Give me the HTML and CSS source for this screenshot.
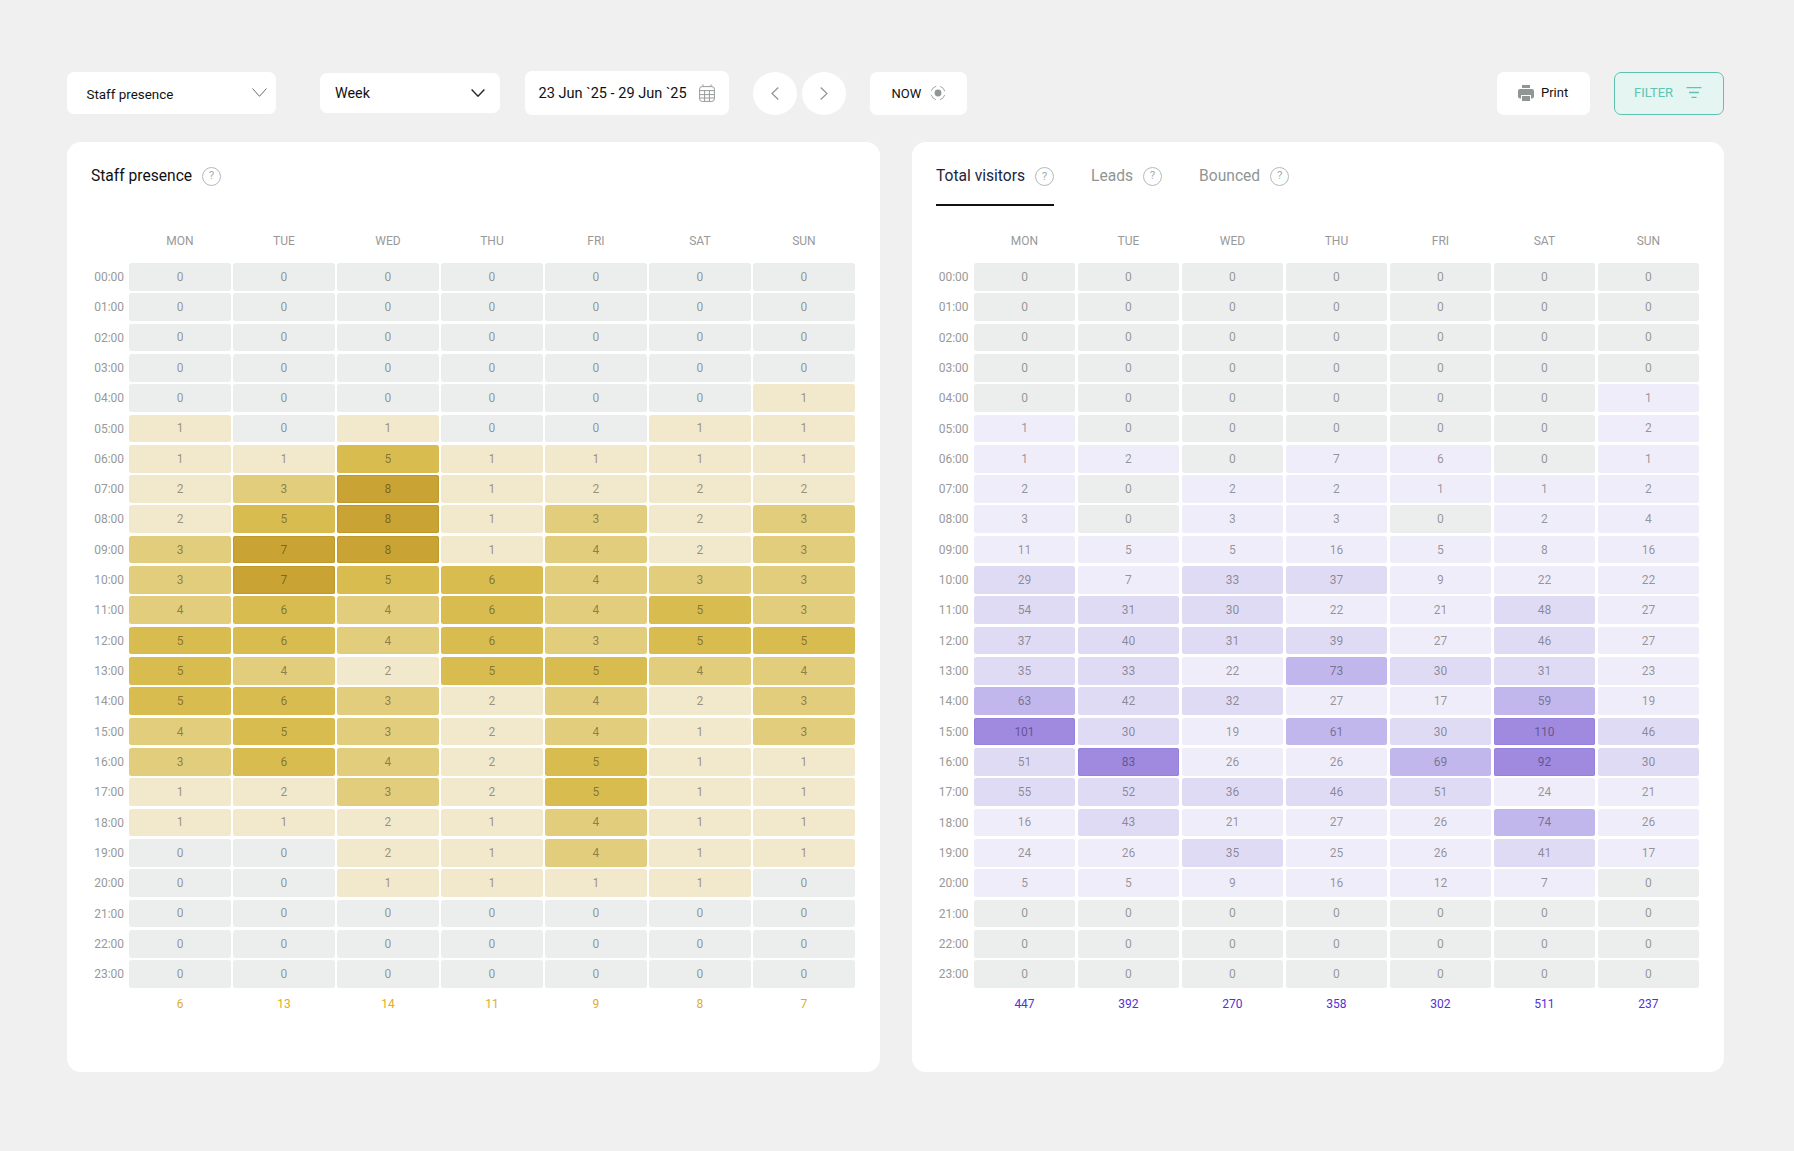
FILE: index.html
```html
<!DOCTYPE html>
<html lang="en">
<head>
<meta charset="utf-8">
<title>Staff presence</title>
<link rel="stylesheet" href="styles.css">
</head>
<body>
<main class="page">
<header class="toolbar">
  <div class="box sel-type"><span class="sel-type-label">Staff presence</span><svg class="chev-thin" viewBox="0 0 15 9"><path d="M.5.5 7.5 8.3 14.5.5"/></svg></div>
  <div class="box sel-range"><span>Week</span><svg class="chev-bold" viewBox="0 0 14 8"><path d="M.6.6 7 7.2 13.4.6"/></svg></div>
  <div class="box date"><span>23 Jun `25 - 29 Jun `25</span><svg class="cal" viewBox="0 0 16 18"><rect x=".6" y="2.6" width="14.8" height="14.8" rx="2.6"/><path d="M.6 6.6h14.8M.6 10.6h14.8M.6 14h14.8M5.6 6.6v10.8M10.4 6.6v10.8M4 .4v2.2M12 .4v2.2"/></svg></div>
  <button class="round"><svg viewBox="0 0 8 13"><path d="M7.3.5 1 6.5l6.3 6"/></svg></button>
  <button class="round next"><svg viewBox="0 0 8 13"><path d="M.7.5 7 6.5l-6.3 6"/></svg></button>
  <div class="box now"><span>NOW</span><svg class="now-ico" viewBox="0 0 16 16"><circle class="now-ring" cx="8" cy="8" r="7"/><circle class="now-dot" cx="8" cy="8" r="3.4"/></svg></div>
  <div class="box print"><svg class="print-ico" viewBox="0 0 16 16"><path d="M4 0h8v3H4z"/><path d="M2 4h12a2 2 0 0 1 2 2v5.500a2 2 0 0 1-2 2h-1V10H3v3.500H2a2 2 0 0 1-2-2V6a2 2 0 0 1 2-2z"/><path d="M4 11h8v5H4z"/></svg><span>Print</span></div>
  <div class="box filter"><span>FILTER</span><svg class="filter-ico" viewBox="0 0 16 11"><path d="M.5.7h15M3 5.500h10M5.500 10.300h5"/></svg></div>
</header>

<div class="cards">
<section class="card gold">
  <div class="card-head"><div class="tab tab-title">Staff presence<span class="help">?</span></div></div>
  <div class="heat">
    <div></div><div class="d">MON</div><div class="d">TUE</div><div class="d">WED</div><div class="d">THU</div><div class="d">FRI</div><div class="d">SAT</div><div class="d">SUN</div>
    <div class="t">00:00</div><div class="c l0">0</div><div class="c l0">0</div><div class="c l0">0</div><div class="c l0">0</div><div class="c l0">0</div><div class="c l0">0</div><div class="c l0">0</div>
    <div class="t">01:00</div><div class="c l0">0</div><div class="c l0">0</div><div class="c l0">0</div><div class="c l0">0</div><div class="c l0">0</div><div class="c l0">0</div><div class="c l0">0</div>
    <div class="t">02:00</div><div class="c l0">0</div><div class="c l0">0</div><div class="c l0">0</div><div class="c l0">0</div><div class="c l0">0</div><div class="c l0">0</div><div class="c l0">0</div>
    <div class="t">03:00</div><div class="c l0">0</div><div class="c l0">0</div><div class="c l0">0</div><div class="c l0">0</div><div class="c l0">0</div><div class="c l0">0</div><div class="c l0">0</div>
    <div class="t">04:00</div><div class="c l0">0</div><div class="c l0">0</div><div class="c l0">0</div><div class="c l0">0</div><div class="c l0">0</div><div class="c l0">0</div><div class="c l1">1</div>
    <div class="t">05:00</div><div class="c l1">1</div><div class="c l0">0</div><div class="c l1">1</div><div class="c l0">0</div><div class="c l0">0</div><div class="c l1">1</div><div class="c l1">1</div>
    <div class="t">06:00</div><div class="c l1">1</div><div class="c l1">1</div><div class="c l3">5</div><div class="c l1">1</div><div class="c l1">1</div><div class="c l1">1</div><div class="c l1">1</div>
    <div class="t">07:00</div><div class="c l1">2</div><div class="c l2">3</div><div class="c l4">8</div><div class="c l1">1</div><div class="c l1">2</div><div class="c l1">2</div><div class="c l1">2</div>
    <div class="t">08:00</div><div class="c l1">2</div><div class="c l3">5</div><div class="c l4">8</div><div class="c l1">1</div><div class="c l2">3</div><div class="c l1">2</div><div class="c l2">3</div>
    <div class="t">09:00</div><div class="c l2">3</div><div class="c l4">7</div><div class="c l4">8</div><div class="c l1">1</div><div class="c l2">4</div><div class="c l1">2</div><div class="c l2">3</div>
    <div class="t">10:00</div><div class="c l2">3</div><div class="c l4">7</div><div class="c l3">5</div><div class="c l3">6</div><div class="c l2">4</div><div class="c l2">3</div><div class="c l2">3</div>
    <div class="t">11:00</div><div class="c l2">4</div><div class="c l3">6</div><div class="c l2">4</div><div class="c l3">6</div><div class="c l2">4</div><div class="c l3">5</div><div class="c l2">3</div>
    <div class="t">12:00</div><div class="c l3">5</div><div class="c l3">6</div><div class="c l2">4</div><div class="c l3">6</div><div class="c l2">3</div><div class="c l3">5</div><div class="c l3">5</div>
    <div class="t">13:00</div><div class="c l3">5</div><div class="c l2">4</div><div class="c l1">2</div><div class="c l3">5</div><div class="c l3">5</div><div class="c l2">4</div><div class="c l2">4</div>
    <div class="t">14:00</div><div class="c l3">5</div><div class="c l3">6</div><div class="c l2">3</div><div class="c l1">2</div><div class="c l2">4</div><div class="c l1">2</div><div class="c l2">3</div>
    <div class="t">15:00</div><div class="c l2">4</div><div class="c l3">5</div><div class="c l2">3</div><div class="c l1">2</div><div class="c l2">4</div><div class="c l1">1</div><div class="c l2">3</div>
    <div class="t">16:00</div><div class="c l2">3</div><div class="c l3">6</div><div class="c l2">4</div><div class="c l1">2</div><div class="c l3">5</div><div class="c l1">1</div><div class="c l1">1</div>
    <div class="t">17:00</div><div class="c l1">1</div><div class="c l1">2</div><div class="c l2">3</div><div class="c l1">2</div><div class="c l3">5</div><div class="c l1">1</div><div class="c l1">1</div>
    <div class="t">18:00</div><div class="c l1">1</div><div class="c l1">1</div><div class="c l1">2</div><div class="c l1">1</div><div class="c l2">4</div><div class="c l1">1</div><div class="c l1">1</div>
    <div class="t">19:00</div><div class="c l0">0</div><div class="c l0">0</div><div class="c l1">2</div><div class="c l1">1</div><div class="c l2">4</div><div class="c l1">1</div><div class="c l1">1</div>
    <div class="t">20:00</div><div class="c l0">0</div><div class="c l0">0</div><div class="c l1">1</div><div class="c l1">1</div><div class="c l1">1</div><div class="c l1">1</div><div class="c l0">0</div>
    <div class="t">21:00</div><div class="c l0">0</div><div class="c l0">0</div><div class="c l0">0</div><div class="c l0">0</div><div class="c l0">0</div><div class="c l0">0</div><div class="c l0">0</div>
    <div class="t">22:00</div><div class="c l0">0</div><div class="c l0">0</div><div class="c l0">0</div><div class="c l0">0</div><div class="c l0">0</div><div class="c l0">0</div><div class="c l0">0</div>
    <div class="t">23:00</div><div class="c l0">0</div><div class="c l0">0</div><div class="c l0">0</div><div class="c l0">0</div><div class="c l0">0</div><div class="c l0">0</div><div class="c l0">0</div>
    <div></div><div class="s">6</div><div class="s">13</div><div class="s">14</div><div class="s">11</div><div class="s">9</div><div class="s">8</div><div class="s">7</div>
  </div>
</section>

<section class="card violet">
  <div class="card-head tabs">
    <div class="tab active">Total visitors<span class="help">?</span></div>
    <div class="tab">Leads<span class="help">?</span></div>
    <div class="tab">Bounced<span class="help">?</span></div>
  </div>
  <div class="heat">
    <div></div><div class="d">MON</div><div class="d">TUE</div><div class="d">WED</div><div class="d">THU</div><div class="d">FRI</div><div class="d">SAT</div><div class="d">SUN</div>
    <div class="t">00:00</div><div class="c l0">0</div><div class="c l0">0</div><div class="c l0">0</div><div class="c l0">0</div><div class="c l0">0</div><div class="c l0">0</div><div class="c l0">0</div>
    <div class="t">01:00</div><div class="c l0">0</div><div class="c l0">0</div><div class="c l0">0</div><div class="c l0">0</div><div class="c l0">0</div><div class="c l0">0</div><div class="c l0">0</div>
    <div class="t">02:00</div><div class="c l0">0</div><div class="c l0">0</div><div class="c l0">0</div><div class="c l0">0</div><div class="c l0">0</div><div class="c l0">0</div><div class="c l0">0</div>
    <div class="t">03:00</div><div class="c l0">0</div><div class="c l0">0</div><div class="c l0">0</div><div class="c l0">0</div><div class="c l0">0</div><div class="c l0">0</div><div class="c l0">0</div>
    <div class="t">04:00</div><div class="c l0">0</div><div class="c l0">0</div><div class="c l0">0</div><div class="c l0">0</div><div class="c l0">0</div><div class="c l0">0</div><div class="c l1">1</div>
    <div class="t">05:00</div><div class="c l1">1</div><div class="c l0">0</div><div class="c l0">0</div><div class="c l0">0</div><div class="c l0">0</div><div class="c l0">0</div><div class="c l1">2</div>
    <div class="t">06:00</div><div class="c l1">1</div><div class="c l1">2</div><div class="c l0">0</div><div class="c l1">7</div><div class="c l1">6</div><div class="c l0">0</div><div class="c l1">1</div>
    <div class="t">07:00</div><div class="c l1">2</div><div class="c l0">0</div><div class="c l1">2</div><div class="c l1">2</div><div class="c l1">1</div><div class="c l1">1</div><div class="c l1">2</div>
    <div class="t">08:00</div><div class="c l1">3</div><div class="c l0">0</div><div class="c l1">3</div><div class="c l1">3</div><div class="c l0">0</div><div class="c l1">2</div><div class="c l1">4</div>
    <div class="t">09:00</div><div class="c l1">11</div><div class="c l1">5</div><div class="c l1">5</div><div class="c l1">16</div><div class="c l1">5</div><div class="c l1">8</div><div class="c l1">16</div>
    <div class="t">10:00</div><div class="c l2">29</div><div class="c l1">7</div><div class="c l2">33</div><div class="c l2">37</div><div class="c l1">9</div><div class="c l1">22</div><div class="c l1">22</div>
    <div class="t">11:00</div><div class="c l2">54</div><div class="c l2">31</div><div class="c l2">30</div><div class="c l1">22</div><div class="c l1">21</div><div class="c l2">48</div><div class="c l1">27</div>
    <div class="t">12:00</div><div class="c l2">37</div><div class="c l2">40</div><div class="c l2">31</div><div class="c l2">39</div><div class="c l1">27</div><div class="c l2">46</div><div class="c l1">27</div>
    <div class="t">13:00</div><div class="c l2">35</div><div class="c l2">33</div><div class="c l1">22</div><div class="c l3">73</div><div class="c l2">30</div><div class="c l2">31</div><div class="c l1">23</div>
    <div class="t">14:00</div><div class="c l3">63</div><div class="c l2">42</div><div class="c l2">32</div><div class="c l1">27</div><div class="c l1">17</div><div class="c l3">59</div><div class="c l1">19</div>
    <div class="t">15:00</div><div class="c l4">101</div><div class="c l2">30</div><div class="c l1">19</div><div class="c l3">61</div><div class="c l2">30</div><div class="c l4">110</div><div class="c l2">46</div>
    <div class="t">16:00</div><div class="c l2">51</div><div class="c l4">83</div><div class="c l1">26</div><div class="c l1">26</div><div class="c l3">69</div><div class="c l4">92</div><div class="c l2">30</div>
    <div class="t">17:00</div><div class="c l2">55</div><div class="c l2">52</div><div class="c l2">36</div><div class="c l2">46</div><div class="c l2">51</div><div class="c l1">24</div><div class="c l1">21</div>
    <div class="t">18:00</div><div class="c l1">16</div><div class="c l2">43</div><div class="c l1">21</div><div class="c l1">27</div><div class="c l1">26</div><div class="c l3">74</div><div class="c l1">26</div>
    <div class="t">19:00</div><div class="c l1">24</div><div class="c l1">26</div><div class="c l2">35</div><div class="c l1">25</div><div class="c l1">26</div><div class="c l2">41</div><div class="c l1">17</div>
    <div class="t">20:00</div><div class="c l1">5</div><div class="c l1">5</div><div class="c l1">9</div><div class="c l1">16</div><div class="c l1">12</div><div class="c l1">7</div><div class="c l0">0</div>
    <div class="t">21:00</div><div class="c l0">0</div><div class="c l0">0</div><div class="c l0">0</div><div class="c l0">0</div><div class="c l0">0</div><div class="c l0">0</div><div class="c l0">0</div>
    <div class="t">22:00</div><div class="c l0">0</div><div class="c l0">0</div><div class="c l0">0</div><div class="c l0">0</div><div class="c l0">0</div><div class="c l0">0</div><div class="c l0">0</div>
    <div class="t">23:00</div><div class="c l0">0</div><div class="c l0">0</div><div class="c l0">0</div><div class="c l0">0</div><div class="c l0">0</div><div class="c l0">0</div><div class="c l0">0</div>
    <div></div><div class="s">447</div><div class="s">392</div><div class="s">270</div><div class="s">358</div><div class="s">302</div><div class="s">511</div><div class="s">237</div>
  </div>
</section>
</div>
</main>
</body>
</html>
```

FILE: styles.css
```css
* { box-sizing: border-box; }
html, body { margin: 0; padding: 0; }
body {
  background: #f0f0f0;
  font-family: Roboto, "Liberation Sans", sans-serif;
  color: #111;
  min-height: 1151px;
}
.page { padding: 71px 70px 0 67px; }

/* toolbar */
.toolbar { display: flex; align-items: center; height: 44px; }
.box {
  display: flex;
  align-items: center;
  background: #fff;
  border-radius: 7px;
  font-size: 14px;
  flex: none;
}
svg { display: block; flex: none; fill: none; }

.sel-type { width: 209px; height: 42px; padding: 0 9px 0 19.500px; justify-content: space-between; font-size: 13.400px; }
.sel-type-label { padding-top: 3px; }
.chev-thin { width: 15px; height: 9px; margin-top: -1px; stroke: #666b69; stroke-width: 1; }

.sel-range { width: 180px; height: 40px; margin-left: 44px; padding: 0 15px; justify-content: space-between; font-size: 14.300px; }
.chev-bold { width: 14px; height: 8px; stroke: #222; stroke-width: 1.4; }

.date { width: 204px; height: 44px; margin-left: 25px; padding: 0 14px 0 13.500px; justify-content: space-between; font-size: 14.550px; }
.cal { width: 16px; height: 18px; stroke: #959c99; stroke-width: 1; }

.round {
  width: 44px;
  height: 43px;
  margin-left: 24px;
  padding: 0;
  border: 0;
  border-radius: 50%;
  background: #fff;
  display: flex;
  align-items: center;
  justify-content: center;
  flex: none;
}
.round svg { width: 8px; height: 13px; stroke: #8f9693; stroke-width: 1.2; }
.round.next { margin-left: 5px; }

.now { width: 97px; height: 43px; margin-left: 24px; padding-left: 21.500px; gap: 9px; font-size: 13px; }
.now-ico { width: 16px; height: 16px; }
.now-ring { stroke: #a3a9a6; stroke-width: 1; stroke-dasharray: 7 4; stroke-dashoffset: 9; }
.now-dot { fill: #8f9693; }

.print { width: 93px; height: 43px; margin-left: auto; padding: 0 0 1px 21px; gap: 7px; font-size: 13px; }
.print-ico { width: 16px; height: 16px; fill: #8f9693; }

.filter {
  width: 110px;
  height: 43px;
  margin-left: 24px;
  padding: 0 0 1px 19px;
  gap: 13px;
  font-size: 13px;
  color: #5fc4b3;
  background: #e4f5f2;
  border: 1.500px solid #5fc2b1;
}
.filter-ico { width: 16px; height: 11px; stroke: #5fc4b3; stroke-width: 1.3; }

/* cards */
.cards { display: grid; grid-template-columns: 813px 812px; gap: 32px; margin-top: 27px; }
.card { background: #fff; border-radius: 14px; padding: 0 25px 54px 24px; }
.gold { padding-right: 25.500px; }
.card-head { height: 64px; display: flex; gap: 37px; }
.tab {
  display: flex;
  align-items: center;
  gap: 10px;
  height: 64px;
  padding-top: 22px;
  padding-bottom: 18px;
  font-size: 15.600px;
  color: #8f9693;
}
.tab-title { color: #111; }
.tab.active { color: #1c2540; border-bottom: 2.500px solid #111; padding-bottom: 15.500px; }
.help {
  width: 19px;
  height: 19px;
  border: 1.300px solid #b4bab8;
  border-radius: 50%;
  color: #a6acaa;
  font-size: 11.500px;
  line-height: 1;
  display: flex;
  align-items: center;
  justify-content: center;
  flex: none;
}

/* heat grid */
.heat {
  display: grid;
  grid-template-columns: 1fr repeat(7, 101.2px);
  grid-template-rows: 29.370px repeat(24, 27.7px) 28px;
  gap: 2.63px 2.8px;
  margin-top: 25px;
  font-size: 12px;
}
.d { text-align: center; line-height: 20px; color: #999; }
.t { text-align: right; padding: 1px 2.500px 0 0; line-height: 27.700px; color: #999; }
.c {
  border-radius: 2.500px;
  display: flex;
  align-items: center;
  justify-content: center;
  color: rgba(0, 0, 0, .4);
}
.s { text-align: center; line-height: 28px; }
.l0 { background: #ebeeed; }

.gold .l1 { background: #f2e8cb; }
.gold .l2 { background: #e2cd7c; }
.gold .l3 { background: #d9bc50; }
.gold .l4 { background: #c9a434; box-shadow: inset 0 0 0 1px #c09a28; }
.gold .s { color: #dfad2a; }

.violet .l1 { background: #efedf9; }
.violet .l2 { background: #e0dbf4; }
.violet .l3 { background: #c1b7ec; }
.violet .l4 { background: #9f8ae0; box-shadow: inset 0 0 0 1px #9681de; }
.violet .s { color: #5231d6; }
```
